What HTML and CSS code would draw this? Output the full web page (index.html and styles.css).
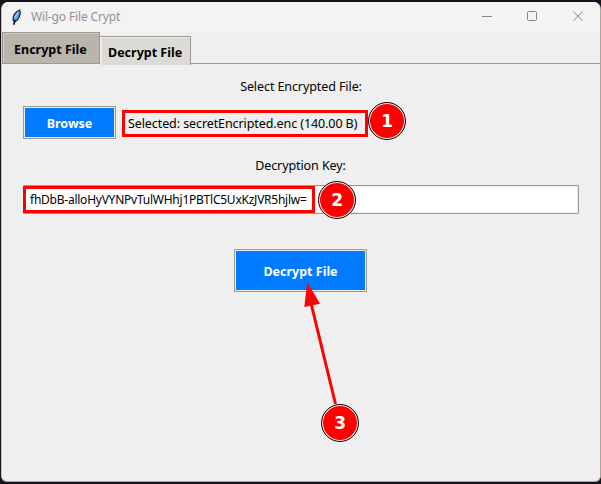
FILE: index.html
```html
<!DOCTYPE html>
<html lang="en">
<head>
<meta charset="utf-8">
<title>Wil-go File Crypt</title>
<link rel="stylesheet" href="styles.css">
</head>
<body>
<main class="window">
  <header class="titlebar">
    <svg class="feather" width="12" height="17" viewBox="0 0 12 17">
      <path d="M2.2 11.5C1.2 7.5 4 2.5 8.8 1C10 4 8.4 10.5 4.5 12.5Z" fill="#5c9be0" stroke="#1c2330" stroke-width="1.2"/>
      <path d="M4 11L2.8 15.8" fill="none" stroke="#111" stroke-width="1.6"/>
      <path d="M7.4 3L3.8 9" stroke="#b5d7ff" stroke-width="1"/>
    </svg>
    <span class="title">Wil-go File Crypt</span>
    <svg class="controls" width="104" height="12" viewBox="0 0 104 12">
      <path d="M0 5.5H10" />
      <rect x="45.5" y="0.5" width="9" height="9" rx="1"/>
      <path d="M91.3 0.5L100.7 9.9M100.7 0.5L91.3 9.9"/>
    </svg>
  </header>
  <nav class="tabs">
    <div class="tab tab-idle"><span>Encrypt File</span></div>
    <div class="tab tab-active"><span>Decrypt File</span></div>
  </nav>
  <section class="panel">
    <div class="label l-select"><span>Select Encrypted File:</span></div>
    <div class="file-row">
      <button class="button browse"><span>Browse</span></button>
      <div class="selected"><span>Selected: secretEncripted.enc (140.00 B)</span></div>
    </div>
    <div class="label l-key"><span>Decryption Key:</span></div>
    <div class="entry"><div class="key"><span>fhDbB-alloHyVYNPvTulWHhj1PBTlC5UxKzJVR5hjlw=</span></div></div>
    <button class="button decrypt"><span>Decrypt File</span></button>
  </section>
</main>
<svg class="arrow" width="60" height="130" viewBox="0 0 60 130">
  <path d="M20 18L45.5 123" stroke="#f00" stroke-width="3"/>
  <path d="M17.3 1L30 22.8L14.3 26Z" fill="#f00"/>
</svg>
<div class="badge b1">1</div>
<div class="badge b2">2</div>
<div class="badge b3">3</div>
</body>
</html>
```
FILE: styles.css
```css
* { box-sizing: border-box; }
body {
  margin: 0;
  width: 601px;
  height: 484px;
  overflow: hidden;
  padding: 2px 0 0 1px;
  background: #15141a;
  font: 12.5px/16px "Noto Sans", "Open Sans", sans-serif;
  letter-spacing: -0.09px;
  color: #000;
}
span { white-space: nowrap; }
.window {
  width: 600px;
  height: 480px;
  display: flex;
  flex-direction: column;
  background: #efefef;
  border: solid #aaa69d;
  border-width: 0 1px 1px 1px;
  border-left-color: #c9c7c3;
  border-radius: 7px 7px 6px 6px;
  overflow: hidden;
}
.titlebar {
  height: 30px;
  flex: none;
  display: flex;
  align-items: center;
  padding: 0 14px 0 9px;
  background: #f3f3f3;
  color: #929292;
}
.feather { margin-right: 8px; }
.title { font-size: 12px; letter-spacing: -0.15px; }
.controls { margin-left: auto; fill: none; stroke: #858585; stroke-width: 1; }
.tabs {
  height: 32px;
  flex: none;
  display: flex;
  align-items: flex-start;
  position: relative;
  z-index: 1;
}
.tab {
  border: 1px solid #9e9a91;
  font-weight: bold;
  letter-spacing: 0;
  box-shadow: inset 1px 1px #eeebe7;
}
.tab-idle {
  width: 98px;
  height: 32px;
  padding: 9px 0 0 11px;
  background: #bab5ab;
  box-shadow: inset 1px 1px #cfcac1;
}
.tab-active {
  width: 91px;
  height: 29px;
  margin-top: 4px;
  padding: 8px 0 0 7px;
  background: #dcdad5;
  border-bottom: 0;
  border-left-color: #eeebe7;
}
.panel {
  flex: 1;
  display: flex;
  flex-direction: column;
  margin-top: -1px;
  border-top: 1px solid #9e9a91;
  padding: 15px 21px 0;
}
.label { text-align: center; height: 16px; }
.file-row { display: flex; align-items: center; height: 33px; margin-top: 11px; gap: 6px; }
.button {
  display: flex;
  justify-content: center;
  align-items: center;
  padding: 2px 0 0;
  border: 1px solid #9e9a91;
  background: #007bff;
  box-shadow: inset 0 0 0 1px #eeebe7;
  color: #fff;
  font: bold 12.5px/16px "Noto Sans", "Open Sans", sans-serif;
  letter-spacing: 0;
}
.browse { width: 93px; height: 33px; }
.selected {
  width: 246px;
  height: 27px;
  margin-top: 1px;
  padding: 3px 0 0 3px;
  border: 3px solid #f00;
}
.l-key { margin-top: 19px; padding-right: 1px; }
.entry {
  width: 556px;
  height: 29px;
  margin-top: 11px;
  border: 1px solid #9e9a91;
  border-radius: 1px;
  background: #fff;
  box-shadow: inset 0 0 0 1px #eeebe7;
}
.key {
  width: 292px;
  height: 27px;
  margin-left: -1px;
  padding: 3px 0 0 4px;
  border: 3px solid #f00;
  font-size: 12px;
  letter-spacing: -0.24px;
}
.decrypt { width: 133px; height: 43px; margin: 35px 0 0 211px; }
.arrow { position: absolute; left: 290px; top: 281px; }
.badge {
  position: absolute;
  width: 38px;
  height: 38px;
  border: 1px solid #111;
  border-radius: 50%;
  background: #f00;
  box-shadow: inset 0 0 0 1px #fff;
  color: #fff;
  font: bold 17px/37px "DejaVu Sans", sans-serif;
  text-align: center;
}
.b1 { left: 368px; top: 102px; }
.b2 { left: 318px; top: 181px; }
.b3 { left: 321px; top: 404px; }
```
